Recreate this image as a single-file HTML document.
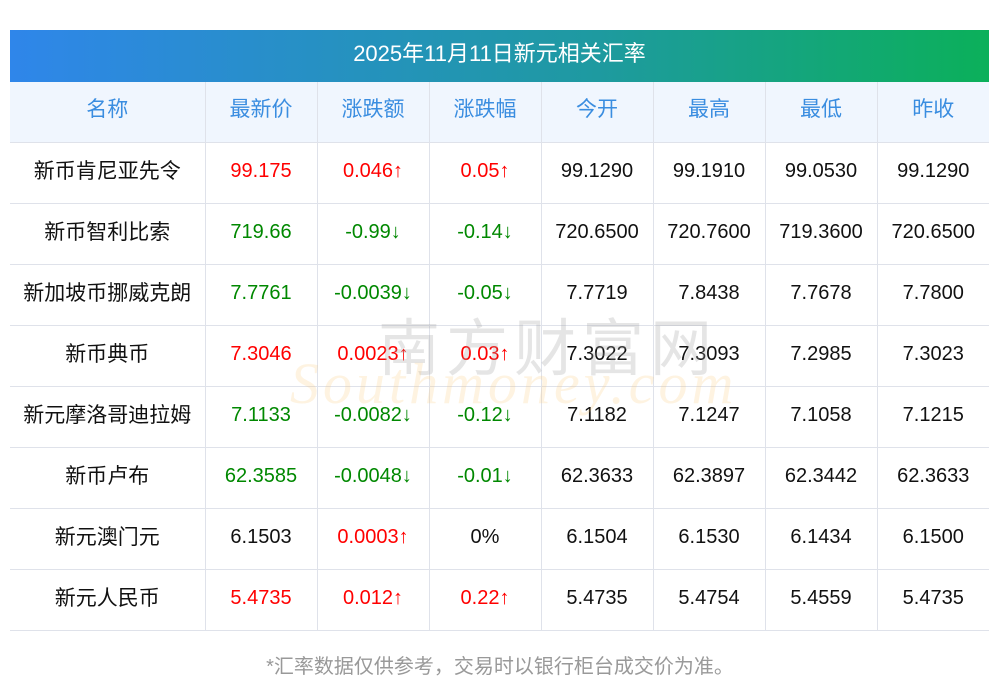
<!DOCTYPE html>
<html><head><meta charset="utf-8"><style>
body{margin:0;width:1000px;height:697px;background:#fff;font-family:"Liberation Sans","Noto Sans CJK SC",sans-serif;position:relative;overflow:hidden}
.title{position:absolute;left:10px;top:30px;width:979px;height:52px;background:linear-gradient(90deg,#2f86ea,#1e9aa0 60%,#0bb05a);color:#fff;font-size:22px;line-height:48px;text-align:center}
table{position:absolute;left:10px;top:82px;border-collapse:collapse;width:979px;table-layout:fixed}
td{height:56px;border:1px solid #dfe2ea;text-align:center;font-size:20px;color:#111;padding:0 0 4px 0;border-top:none;line-height:24px}
tr td:first-child{border-left:none}tr td:last-child{border-right:none}
tr.h td{background:#f0f6fe;color:#3a8de0;font-size:21px}
td.n span{position:relative;top:1px}
.r{color:#f00}.g{color:#080}
.n{font-size:21px}
.note{position:absolute;top:650px;left:0;width:1000px;text-align:center;color:#999;font-size:20px}
.wm{position:absolute;left:378px;top:298px;font-size:62px;color:rgba(160,160,160,.28);letter-spacing:6px;font-family:"Noto Sans CJK SC",sans-serif}
.wm2{position:absolute;left:290px;top:350px;font-size:58px;color:rgba(250,200,120,.22);font-style:italic;font-family:"Liberation Serif",serif;letter-spacing:4px}
</style></head><body>
<div class="title">2025年11月11日新元相关汇率</div>
<table>
<colgroup><col style="width:195px"><col style="width:112px"><col style="width:112px"><col style="width:112px"><col style="width:112px"><col style="width:112px"><col style="width:112px"><col style="width:112px"></colgroup>
<tr class="h"><td>名称</td><td>最新价</td><td>涨跌额</td><td>涨跌幅</td><td>今开</td><td>最高</td><td>最低</td><td>昨收</td></tr>
<tr><td class="n"><span>新币肯尼亚先令</span></td><td class="r">99.175</td><td class="r">0.046↑</td><td class="r">0.05↑</td><td>99.1290</td><td>99.1910</td><td>99.0530</td><td>99.1290</td></tr>
<tr><td class="n"><span>新币智利比索</span></td><td class="g">719.66</td><td class="g">-0.99↓</td><td class="g">-0.14↓</td><td>720.6500</td><td>720.7600</td><td>719.3600</td><td>720.6500</td></tr>
<tr><td class="n"><span>新加坡币挪威克朗</span></td><td class="g">7.7761</td><td class="g">-0.0039↓</td><td class="g">-0.05↓</td><td>7.7719</td><td>7.8438</td><td>7.7678</td><td>7.7800</td></tr>
<tr><td class="n"><span>新币典币</span></td><td class="r">7.3046</td><td class="r">0.0023↑</td><td class="r">0.03↑</td><td>7.3022</td><td>7.3093</td><td>7.2985</td><td>7.3023</td></tr>
<tr><td class="n"><span>新元摩洛哥迪拉姆</span></td><td class="g">7.1133</td><td class="g">-0.0082↓</td><td class="g">-0.12↓</td><td>7.1182</td><td>7.1247</td><td>7.1058</td><td>7.1215</td></tr>
<tr><td class="n"><span>新币卢布</span></td><td class="g">62.3585</td><td class="g">-0.0048↓</td><td class="g">-0.01↓</td><td>62.3633</td><td>62.3897</td><td>62.3442</td><td>62.3633</td></tr>
<tr><td class="n"><span>新元澳门元</span></td><td>6.1503</td><td class="r">0.0003↑</td><td>0%</td><td>6.1504</td><td>6.1530</td><td>6.1434</td><td>6.1500</td></tr>
<tr><td class="n"><span>新元人民币</span></td><td class="r">5.4735</td><td class="r">0.012↑</td><td class="r">0.22↑</td><td>5.4735</td><td>5.4754</td><td>5.4559</td><td>5.4735</td></tr>
</table>
<div class="wm">南方财富网</div>
<div class="wm2">Southmoney.com</div>
<div class="note">*汇率数据仅供参考，交易时以银行柜台成交价为准。</div>
</body></html>
